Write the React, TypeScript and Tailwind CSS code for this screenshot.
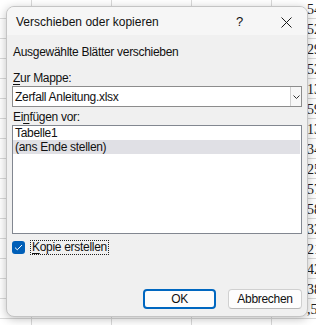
import React from 'react';

const cells = Array.from({ length: 17 * 5 });
const numbers = ['54', '52', '29', '52', '13', '59', '13', '34', '25', '57', '58', '32', '21', '42', '38', ',55'];

export default function App() {
  return (
    <div className="relative w-[316px] h-[325px] overflow-hidden bg-white font-['Liberation_Sans',Arial,sans-serif] text-[#111]">
      {/* Tabelle im Hintergrund */}
      <div className="absolute left-0 top-[-1px] grid grid-cols-[32px_80px_80px_80px_80px] auto-rows-[20px]">
        {cells.map((_, i) => (
          <div key={i} className="border-r border-b border-[#d9d9d9]" />
        ))}
      </div>
      <div className="absolute left-[307px] top-[-1px] w-[9px] overflow-hidden flex flex-col">
        {numbers.map((n, i) => (
          <div key={i} className="h-[20px] flex items-end pb-[2px] text-[14px] leading-[14px] font-['Liberation_Serif',serif] text-[#202020] whitespace-nowrap">
            {n}
          </div>
        ))}
      </div>

      {/* Dialog */}
      <div className="absolute left-[6px] top-[6px] w-[302px] h-[311px] flex flex-col rounded-[8px] border border-[#c4c4c4] bg-[#f0f0f0] shadow-[0_2px_10px_rgba(0,0,0,0.25)] overflow-hidden">
        <div className="h-[28px] flex items-center pt-[2px] pl-[9px] bg-[#f6f6f6] text-[12px]">
          <span className="flex-1">Verschieben oder kopieren</span>
          <span className="w-[8px] mr-[37px] text-[13px]">?</span>
          <svg width="11" height="11" viewBox="0 0 11 11" className="mr-[15px]">
            <path d="M0.5 0.5 L10.5 10.5 M10.5 0.5 L0.5 10.5" stroke="#1a1a1a" strokeWidth="1" />
          </svg>
        </div>

        <div className="flex-1 flex flex-col px-[5px] pb-[7px] text-[12px] tracking-[-0.3px] leading-[16px]">
          <div className="mt-[9px] pl-[1px]">Ausgewählte Blätter verschieben</div>

          <div className="mt-[10px] pl-[1px]">
            <span className="underline underline-offset-2">Z</span>ur Mappe:
          </div>
          <div className="h-[21px] flex items-center border border-[#8c8c8c] bg-white">
            <span className="flex-1 pl-[2px]">Zerfall Anleitung.xlsx</span>
            <div className="w-[11px] h-full flex items-center justify-center border-l border-[#cfcfcf] bg-[#f7f7f7]">
              <svg width="7" height="4" viewBox="0 0 7 4">
                <path d="M0.5 0.5 L3.5 3.5 L6.5 0.5" stroke="#333" strokeWidth="1" fill="none" />
              </svg>
            </div>
          </div>

          <div className="mt-[2px] pl-[1px]">
            Ei<span className="underline underline-offset-2">n</span>fügen vor:
          </div>
          <div className="h-[109px] border border-[#828790] bg-white pr-[1px] leading-[14px]">
            <div className="pl-[2px]">Tabelle1</div>
            <div className="pl-[2px] bg-[#e0e0e5]">(ans Ende stellen)</div>
          </div>

          <div className="mt-[6px] flex items-center gap-[5px]">
            <div className="w-[13px] h-[13px] rounded-[3px] bg-[#005fb8] flex items-center justify-center">
              <svg width="9" height="7" viewBox="0 0 9 7">
                <path d="M1 3.6 L3.3 5.8 L8 1" stroke="white" strokeWidth="1" fill="none" />
              </svg>
            </div>
            <div className="border border-dotted border-[#222] px-[1px] leading-[13px]">
              <span className="underline underline-offset-2">K</span>opie erstellen
            </div>
          </div>

          <div className="mt-auto flex justify-end gap-[12px]">
            <button className="w-[73px] h-[20px] rounded-[4px] border-2 border-[#0067c0] bg-[#fdfdfd] text-[12px] leading-[14px]">
              OK
            </button>
            <button className="w-[74px] h-[20px] rounded-[4px] border border-[#d0d0d0] border-b-[#b8b8b8] bg-[#fdfdfd] text-[12px] leading-[14px]">
              Abbrechen
            </button>
          </div>
        </div>
      </div>
    </div>
  );
}
